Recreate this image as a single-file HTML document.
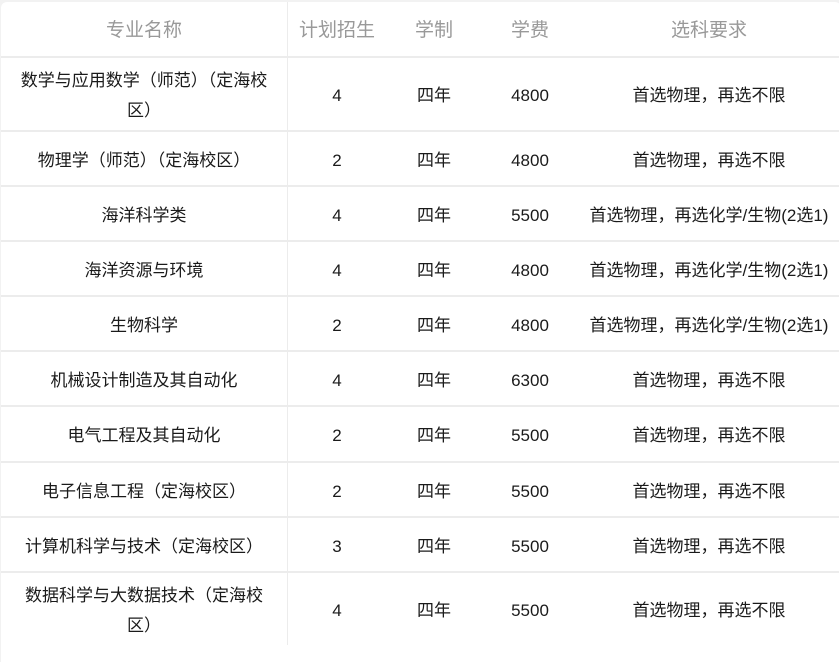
<!DOCTYPE html>
<html><head><meta charset="utf-8"><style>
html,body{margin:0;padding:0;background:#f2f2f2;width:839px;height:643px;overflow:hidden}
body{font-family:"Liberation Sans","Noto Sans CJK SC",sans-serif;}
.wrap{position:absolute;left:1px;top:2px;width:840px;height:660px;background:#fff;border-radius:6px 6px 0 0;overflow:hidden}
.row{position:absolute;left:0;width:840px;border-bottom:2px solid #ececec;box-sizing:border-box;display:flex;align-items:center;font-size:17px;color:#1a1a1a;padding-top:4px}
.row div{text-align:center;box-sizing:border-box;line-height:30px}
.c1{width:287px;border-right:1px solid #ececec;height:calc(100% + 4px);margin-top:-4px;padding-top:4px !important;display:flex;align-items:center;justify-content:center;padding:0 12px}
.c2{width:98px}.c3{width:96px}.c4{width:96px}.c5{width:262px;white-space:nowrap}
.hd{color:#999;font-size:19px}
</style></head><body><div class="wrap">
<div class="row hd" style="top:0;height:56px"><div class="c1">专业名称</div><div class="c2">计划招生</div><div class="c3">学制</div><div class="c4">学费</div><div class="c5">选科要求</div></div>
<div class="row" style="top:56px;height:74px"><div class="c1">数学与应用数学（师范）（定海校区）</div><div class="c2">4</div><div class="c3">四年</div><div class="c4">4800</div><div class="c5">首选物理，再选不限</div></div>
<div class="row" style="top:130px;height:55px"><div class="c1">物理学（师范）（定海校区）</div><div class="c2">2</div><div class="c3">四年</div><div class="c4">4800</div><div class="c5">首选物理，再选不限</div></div>
<div class="row" style="top:185px;height:55px"><div class="c1">海洋科学类</div><div class="c2">4</div><div class="c3">四年</div><div class="c4">5500</div><div class="c5">首选物理，再选化学/生物(2选1)</div></div>
<div class="row" style="top:240px;height:55px"><div class="c1">海洋资源与环境</div><div class="c2">4</div><div class="c3">四年</div><div class="c4">4800</div><div class="c5">首选物理，再选化学/生物(2选1)</div></div>
<div class="row" style="top:295px;height:55px"><div class="c1">生物科学</div><div class="c2">2</div><div class="c3">四年</div><div class="c4">4800</div><div class="c5">首选物理，再选化学/生物(2选1)</div></div>
<div class="row" style="top:350px;height:55px"><div class="c1">机械设计制造及其自动化</div><div class="c2">4</div><div class="c3">四年</div><div class="c4">6300</div><div class="c5">首选物理，再选不限</div></div>
<div class="row" style="top:405px;height:56px"><div class="c1">电气工程及其自动化</div><div class="c2">2</div><div class="c3">四年</div><div class="c4">5500</div><div class="c5">首选物理，再选不限</div></div>
<div class="row" style="top:461px;height:55px"><div class="c1">电子信息工程（定海校区）</div><div class="c2">2</div><div class="c3">四年</div><div class="c4">5500</div><div class="c5">首选物理，再选不限</div></div>
<div class="row" style="top:516px;height:55px"><div class="c1">计算机科学与技术（定海校区）</div><div class="c2">3</div><div class="c3">四年</div><div class="c4">5500</div><div class="c5">首选物理，再选不限</div></div>
<div class="row" style="top:571px;height:72px;border-bottom:none"><div class="c1">数据科学与大数据技术（定海校区）</div><div class="c2">4</div><div class="c3">四年</div><div class="c4">5500</div><div class="c5">首选物理，再选不限</div></div>
</div></body></html>
